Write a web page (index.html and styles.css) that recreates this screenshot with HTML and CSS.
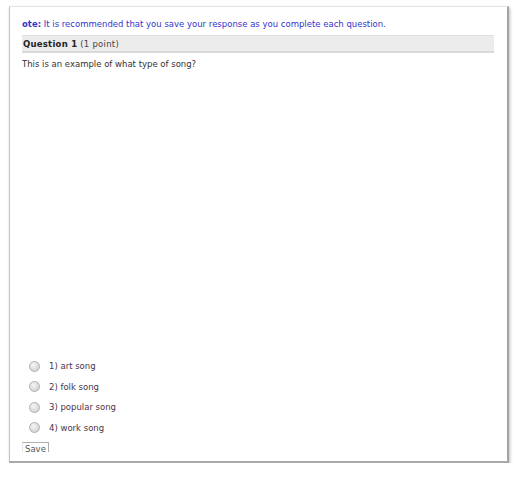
FILE: index.html
```html
<!DOCTYPE html>
<html lang="en">
<head>
  <meta charset="UTF-8">
  <title>Question 1</title>
  <link rel="stylesheet" href="styles.css">
</head>
<body>
  <div class="frame">
    <div class="page">
      <p class="note"><strong>ote:</strong> It is recommended that you save your response as you complete each question.</p>
      <div class="qhead"><strong>Question 1</strong> (1 point)</div>
      <p class="qtext">This is an example of what type of song?</p>
      <div class="media"></div>
      <ul class="answers">
        <li><span class="radio"></span>1) art song</li>
        <li><span class="radio"></span>2) folk song</li>
        <li><span class="radio"></span>3) popular song</li>
        <li><span class="radio"></span>4) work song</li>
      </ul>
      <button class="save">Save</button>
    </div>
  </div>
</body>
</html>
```

FILE: styles.css
```css
body {
  margin: 0;
  background: #fff;
  font-family: "DejaVu Sans", Verdana, sans-serif;
  font-size: 8.5px;
  color: #333;
}
.frame {
  margin: 6px 0 0 9px;
  width: 500px;
  height: 457px;
  box-sizing: border-box;
  border-top: 1px solid #e2e2e2;
  border-left: 1px solid #c4c4c4;
  border-right: 2px solid #a4a4a4;
  border-bottom: 2px solid #a8a8a8;
  box-shadow: 1px 2px 3px rgba(0, 0, 0, 0.25);
}
.page {
  height: 445px;
  overflow: hidden;
  padding: 12px 13px 0 12px;
  box-sizing: border-box;
}
p {
  margin: 0;
  line-height: 10px;
}
.note {
  color: #3535c8;
  margin-bottom: 6px;
}
.qhead {
  height: 15px;
  line-height: 16px;
  padding-left: 1px;
  background: #ececec;
  border-top: 1px solid #e0e0e0;
  border-bottom: 2px solid #dadada;
  color: #444;
  letter-spacing: 0.25px;
}
.qhead strong {
  color: #222;
}
.qtext {
  margin-top: 6px;
}
.media {
  height: 287px;
}
.answers {
  list-style: none;
  margin: 0;
  padding: 0;
}
.answers li {
  display: flex;
  align-items: center;
  height: 20.5px;
  color: #4a3448;
}
.radio {
  width: 9px;
  height: 9px;
  margin: 0 9px 0 7px;
  border: 1px solid #b0b0b0;
  border-radius: 50%;
  background: radial-gradient(circle at 40% 35%, #f6f6f6, #c8c8c8);
}
.save {
  margin-top: 4px;
  padding: 1px 2px 2px;
  font-family: inherit;
  font-size: 8.5px;
  color: #555;
  background: #fff;
  border: 1px solid #b0b0b0;
  border-left-color: #e6e6e6;
}
```
